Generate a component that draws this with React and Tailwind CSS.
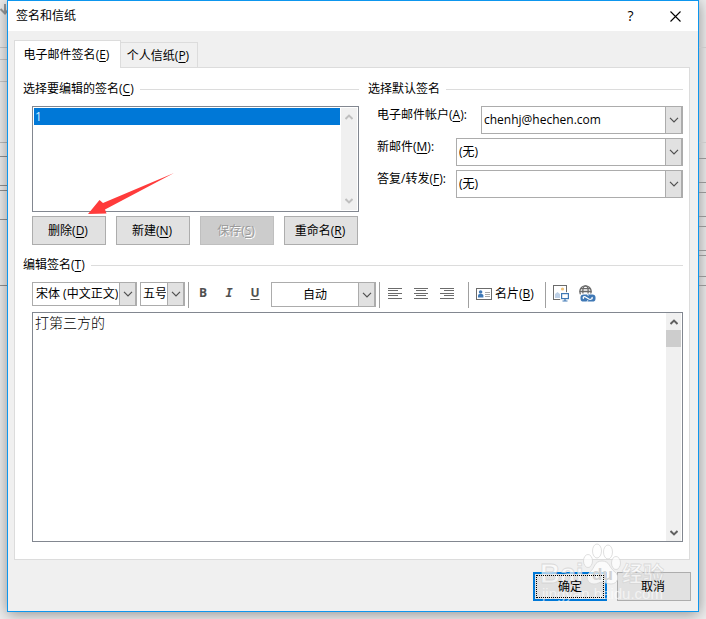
import React from "react";

const leftRows = [
  { h: "h-[48px]", c: "border-[#c9c9c9]" },
  { h: "h-[12px]", c: "border-[#c9c9c9]" },
  { h: "h-[22px]", c: "border-[#c9c9c9]" },
  { h: "h-[61px]", c: "border-[#bcbcbc]" },
  { h: "h-[14px]", c: "border-[#939393]" },
  { h: "h-[29px]", c: "border-[#939393]" },
  { h: "h-[5px]", c: "border-[#939393]" },
  { h: "h-[29px]", c: "border-[#939393]" },
  { h: "h-[66px]", c: "border-[#939393]" },
];

const rightRows = [
  { h: "h-[48px]", c: "border-[#c9c9c9]" },
  { h: "h-[95px]", c: "border-[#c9c9c9]" },
  { h: "h-[16px]", c: "border-[#939393]" },
  { h: "h-[24px]", c: "border-[#939393]" },
  { h: "h-[10px]", c: "border-[#939393]" },
  { h: "h-[24px]", c: "border-[#939393]" },
  { h: "h-[10px]", c: "border-[#939393]" },
  { h: "h-[24px]", c: "border-[#939393]" },
  { h: "h-[5px]", c: "border-[#939393]" },
  { h: "h-[21px]", c: "border-[#939393]" },
  { h: "h-[9px]", c: "border-[#939393]" },
];

function Backdrop({ rows, children }) {
  return (
    <div aria-hidden="true" className="relative w-[7px] shrink-0 overflow-hidden">
      {rows.map((r, i) => (
        <div key={i} className={`border-b ${r.h} ${r.c}`} />
      ))}
      {children}
    </div>
  );
}

function Key({ children }) {
  return (
    <>
      (<u className="underline underline-offset-2">{children}</u>)
    </>
  );
}

function Chevron() {
  return (
    <svg width="10" height="6" viewBox="0 0 10 6" fill="none" stroke="#505050" strokeWidth="1.2" aria-hidden="true">
      <path d="M1 0.8 L5 4.8 L9 0.8" />
    </svg>
  );
}

function ScrollArrow({ up, color }) {
  return (
    <svg width="8" height="6" viewBox="0 0 8 6" fill="none" stroke={color} strokeWidth="2" aria-hidden="true">
      <path d={up ? "M0.5 5 L4 1.6 L7.5 5" : "M0.5 1 L4 4.4 L7.5 1"} />
    </svg>
  );
}

function Dropdown({ id, label, value, className, pad = "pl-[2px]" }) {
  return (
    <div className={`relative ${className}`}>
      <select
        id={id}
        aria-label={label}
        className={`block h-full w-full appearance-none overflow-hidden border border-[#acacac] bg-white pr-[18px] text-black outline-none ${pad}`}
      >
        <option>{value}</option>
      </select>
      <span className="pointer-events-none absolute inset-y-0 right-0 flex w-[18px] items-center justify-center border border-r-2 border-[#acacac] bg-[#e1e1e1]">
        <Chevron />
      </span>
    </div>
  );
}

function PushButton({ children, disabled }) {
  return (
    <button
      type="button"
      disabled={disabled}
      className="h-[29px] w-[74px] border border-[#adadad] bg-[#e1e1e1] pr-[2px] text-black disabled:border-[#bfbfbf] disabled:bg-[#cccccc] disabled:text-[#9a9a9a] disabled:[text-shadow:1px_1px_0_#fff]"
    >
      <span className="relative z-10">{children}</span>
    </button>
  );
}

function Heading({ children, htmlFor }) {
  return (
    <div className="flex h-4 items-center gap-[6px]">
      <label htmlFor={htmlFor} className="whitespace-nowrap">{children}</label>
      <span className="h-px flex-1 bg-[#dcdcdc]" />
    </div>
  );
}

function Separator() {
  return <span className="h-[26px] w-px shrink-0 bg-[#a0a0a0]" />;
}

function AlignIcon({ x }) {
  return (
    <svg width="14" height="11" viewBox="0 0 14 11" shapeRendering="crispEdges" fill="#6b6b6b" aria-hidden="true">
      <rect x="0" y="0" width="14" height="1" />
      <rect x={x} y="2" width="10" height="1" />
      <rect x="0" y="5" width="14" height="1" />
      <rect x={x} y="7" width="10" height="1" />
      <rect x="0" y="10" width="14" height="1" />
    </svg>
  );
}

function ToolButton({ label, children, className = "w-[26px]" }) {
  return (
    <button type="button" aria-label={label} className={`flex h-[22px] shrink-0 items-center justify-center ${className}`}>
      {children}
    </button>
  );
}

function CardIcon() {
  return (
    <svg width="16" height="12" viewBox="0 0 16 12" aria-hidden="true">
      <rect x="0.5" y="0.5" width="15" height="11" fill="#fff" stroke="#6b6b6b" />
      <circle cx="4.6" cy="4" r="1.8" fill="#3f78b5" />
      <path d="M2 9.5 V7.6 Q2 6 3.6 6 H5.8 Q7.4 6 7.4 7.6 V9.5 Z" fill="#3f78b5" />
      <path d="M9 4.5 H14 M9 6.5 H14 M9 8.5 H14" stroke="#a8a8a8" strokeWidth="1" />
    </svg>
  );
}

function PictureIcon() {
  return (
    <svg width="16" height="17" viewBox="0 0 16 17" aria-hidden="true">
      <rect x="0.5" y="0.5" width="13" height="14" fill="#fff" stroke="#6b6b6b" />
      <circle cx="9.5" cy="4" r="1.6" fill="#efc27a" />
      <path d="M2 13 V9 L4.5 7 L7 9 V13 Z" fill="#bdd0e6" />
      <rect x="7.2" y="7.2" width="8.8" height="9.8" fill="#fff" />
      <rect x="8.6" y="8.6" width="6.8" height="5" fill="#fff" stroke="#3f78b5" strokeWidth="1.2" />
      <path d="M12 13.6 V15.6 M9.5 16 H14.5" stroke="#3f78b5" strokeWidth="1.2" />
    </svg>
  );
}

function LinkIcon() {
  return (
    <svg width="17" height="17" viewBox="0 0 17 17" fill="none" aria-hidden="true">
      <g stroke="#6b6b6b" strokeWidth="1.3">
        <circle cx="6.5" cy="6.5" r="5.7" />
        <ellipse cx="6.5" cy="6.500" rx="2.7" ry="5.7" />
        <path d="M0.8 6.5 H12.2 M1.6 3.6 H11.4" />
      </g>
      <rect x="1" y="8.6" width="16" height="8.4" rx="2" fill="#fff" />
      <rect x="1.500" y="9.400" width="15" height="7.200" rx="3.2" fill="#3f78b5" />
      <path d="M4.600 13.900 C3.400 12 5.500 11 7 12.200 L9.800 14 C11.600 15 14 13.800 12.900 12" stroke="#fff" strokeWidth="1.300" />
      <path d="M8.300 9.200 L9.300 10.800 M8 16.800 L8.900 15.200" stroke="#fff" strokeWidth="0.900" />
    </svg>
  );
}

function Watermark() {
  return (
    <svg
      aria-hidden="true"
      className="pointer-events-none absolute right-8 bottom-[8px] z-0"
      width="126"
      height="60"
      viewBox="0 0 126 60"
      fontFamily='"Liberation Sans", "Noto Sans CJK SC", sans-serif'
    >
      <g fill="#fff" fillOpacity="0.7" stroke="#d2d2d2" strokeOpacity="0.7" strokeWidth="1">
        <ellipse cx="48" cy="18" rx="4.5" ry="6.5" />
        <ellipse cx="57" cy="8" rx="4.5" ry="7" />
        <ellipse cx="68" cy="9" rx="4.5" ry="7" />
        <ellipse cx="76" cy="20" rx="4.5" ry="6.5" />
        <path d="M62 18 C54 18 55 25 50 29 C45 33 47 41 54 41 C58 41 59 39 62 39 C65 39 67 41 71 41 C78 41 80 33 75 29 C69 25 70 18 62 18 Z" />
      </g>
      <g fontWeight="bold" fill="#fff" fillOpacity="0.65" stroke="#d2d2d2" strokeOpacity="0.8" strokeWidth="0.8">
        <text x="0" y="40" fontSize="28">Bai</text>
        <text x="82" y="38" fontSize="21">经验</text>
      </g>
      <text x="52" y="37" fontSize="17" fontWeight="bold" fill="#d2d2d2">du</text>
      <text x="2" y="56" fontSize="15" fill="#fff" fillOpacity="0.6">jingyan.baidu.com</text>
    </svg>
  );
}

export default function App() {
  return (
    <div className='flex min-h-screen overflow-hidden bg-[#eeeeee] font-["Open_Sans","Noto_Sans_CJK_SC",sans-serif] text-[12px] leading-4 text-black'>
      <Backdrop rows={leftRows}>
        <svg className="absolute top-1 left-0" width="8" height="11" viewBox="0 0 8 11" fill="none" stroke="#9a9a9a" strokeWidth="2">
          <path d="M5 0 V9 M0.5 5 L5 9.5 L9 5" />
        </svg>
      </Backdrop>

      <main className="relative mb-[7px] flex min-w-0 flex-1 flex-col border border-[#0d96ee] bg-[#f0f0f0] shadow-[0_2px_14px_rgba(0,0,0,0.4)]">
        <header className="flex h-[30px] items-center bg-white pl-2">
          <h1 className="flex-1">签名和信纸</h1>
          <button type="button" aria-label="帮助" className="h-full w-[45px] text-[14px] font-medium">?</button>
          <button type="button" aria-label="关闭" className="flex h-full w-[45px] items-center justify-center">
            <svg width="11" height="11" viewBox="0 0 11 11" stroke="#000" strokeWidth="1.1" aria-hidden="true">
              <path d="M0.5 0.5 L10.5 10.5 M10.5 0.5 L0.5 10.5" />
            </svg>
          </button>
        </header>

        <div className="flex flex-1 flex-col px-[6px] pt-[9px]">
          <div role="tablist" className="relative flex items-end">
            <button type="button" role="tab" aria-selected="true" className="relative -mb-px h-[28px] w-[107px] border border-b-0 border-[#dcdcdc] bg-white pr-[2px]">
              电子邮件签名<Key>E</Key>
            </button>
            <button type="button" role="tab" aria-selected="false" className="h-[25px] w-[77px] border border-b-0 border-l-0 border-[#dcdcdc] bg-[#f0f0f0] pt-[2px] pr-[2px]">
              个人信纸<Key>P</Key>
            </button>
          </div>

          <div className="mr-[2px] border border-[#dcdcdc] bg-white pt-[13px] pr-[6px] pb-[17px] pl-2" role="tabpanel">
            <div className="flex gap-[9px]">
              <section className="w-[336px] shrink-0">
                <Heading htmlFor="signatures">选择要编辑的签名<Key>C</Key></Heading>
                <div className="relative mt-[9px] ml-[9px] flex h-[106px] border border-[#828790] bg-white p-px">
                  <select
                    id="signatures"
                    size="6"
                    defaultValue="1"
                    className="h-full min-w-0 flex-1 appearance-none overflow-hidden border-0 bg-white outline-none"
                  >
                    <option
                      value="1"
                      className="h-[17px] min-h-0 p-0 pl-px leading-[17px] checked:bg-[linear-gradient(#0078d7,#0078d7)] [-webkit-text-fill-color:#d5ecff]"
                    >
                      1
                    </option>
                  </select>
                  <div aria-hidden="true" className="ml-px flex w-4 flex-col items-center justify-between bg-[#f0f0f0] py-[6px]">
                    <ScrollArrow up color="#bfbfbf" />
                    <ScrollArrow color="#bfbfbf" />
                  </div>
                  <svg className="pointer-events-none absolute top-[66px] left-[55px]" width="86" height="42" viewBox="0 0 86 42" aria-hidden="true">
                    <path d="M86 0 L15 30 L11.5 27 L0 41 L18.5 40.5 L17 36.5 Z" fill="#ff3b3b" />
                  </svg>
                </div>
                <div className="mt-1 ml-[9px] flex gap-[10px]">
                  <PushButton>删除<Key>D</Key></PushButton>
                  <PushButton>新建<Key>N</Key></PushButton>
                  <PushButton disabled>保存<Key>S</Key></PushButton>
                  <PushButton>重命名<Key>R</Key></PushButton>
                </div>
              </section>

              <section className="min-w-0 flex-1">
                <Heading>选择默认签名</Heading>
                <div className="mt-[9px] ml-[9px] flex flex-col gap-1">
                  <div className="flex items-start">
                    <label htmlFor="account" className="w-[104px] shrink-0 leading-[18px]">电子邮件帐户<Key>A</Key>:</label>
                    <Dropdown id="account" value="chenhj@hechen.com" className="h-7 min-w-0 flex-1" />
                  </div>
                  <div className="flex items-start">
                    <label htmlFor="newmail" className="w-[79px] shrink-0 leading-[18px]">新邮件<Key>M</Key>:</label>
                    <Dropdown id="newmail" value="(无)" className="h-7 min-w-0 flex-1" />
                  </div>
                  <div className="flex items-start">
                    <label htmlFor="reply" className="w-[79px] shrink-0 leading-[18px]">答复/转发<Key>F</Key>:</label>
                    <Dropdown id="reply" value="(无)" className="h-7 min-w-0 flex-1" />
                  </div>
                </div>
              </section>
            </div>

            <section className="mt-3">
              <Heading htmlFor="editor">编辑签名<Key>T</Key></Heading>
              <div className="mt-[9px] ml-[9px] flex h-[25px] items-start">
                <Dropdown label="字体" value="宋体 (中文正文)" className="h-6 w-[105px]" pad="pl-[3px]" />
                <Dropdown label="字号" value="五号" className="mx-[3px] h-6 w-[45px]" />
                <Separator />
                <ToolButton label="加粗" className="ml-px w-[26px]">
                  <span className="text-[12px] font-bold text-[#505050]">B</span>
                </ToolButton>
                <ToolButton label="倾斜">
                  <span className='font-["DejaVu_Sans_Mono",monospace] text-[12px] font-bold text-[#505050] italic'>I</span>
                </ToolButton>
                <ToolButton label="下划线">
                  <span className="text-[12px] font-bold text-[#505050] underline decoration-1 underline-offset-2">U</span>
                </ToolButton>
                <Dropdown label="颜色" value="自动" className="mx-[3px] h-[25px] w-[105px]" pad="pl-[31px]" />
                <Separator />
                <ToolButton label="左对齐" className="ml-[2px] w-[26px]"><AlignIcon x="0" /></ToolButton>
                <ToolButton label="居中"><AlignIcon x="2" /></ToolButton>
                <ToolButton label="右对齐"><AlignIcon x="4" /></ToolButton>
                <span className="w-[8px]" />
                <Separator />
                <button type="button" className="mx-[7px] flex h-[23px] w-[62px] shrink-0 items-center gap-[3px] whitespace-nowrap">
                  <CardIcon />
                  <span>名片<Key>B</Key></span>
                </button>
                <Separator />
                <ToolButton label="图片" className="ml-[2px] w-[26px]"><PictureIcon /></ToolButton>
                <ToolButton label="超链接"><LinkIcon /></ToolButton>
              </div>
              <div className="mt-[5px] ml-[9px] flex h-[230px] border border-[#828790] bg-white">
                <textarea
                  id="editor"
                  defaultValue="打第三方的"
                  className='min-w-0 flex-1 resize-none overflow-hidden px-[2px] font-["Noto_Sans_CJK_SC",sans-serif] text-[14px] leading-[18px] font-light outline-none'
                />
                <div aria-hidden="true" className="mr-px flex w-[15px] flex-col items-center bg-[#f0f0f0]">
                  <span className="flex h-[17px] items-center"><ScrollArrow up color="#606060" /></span>
                  <span className="h-[17px] w-full bg-[#cdcdcd]" />
                  <span className="mt-auto flex h-[17px] items-center"><ScrollArrow color="#606060" /></span>
                </div>
              </div>
            </section>
          </div>

          <footer className="mt-3 mb-[10px] flex justify-end gap-[10px] pr-px">
            <button type="button" className="h-[29px] w-[74px] border-2 border-[#0078d7] bg-[#e1e1e1] p-px">
              <span className="relative z-10 flex h-full items-center justify-center border border-dotted border-black">确定</span>
            </button>
            <PushButton>取消</PushButton>
          </footer>
        </div>
        <Watermark />
      </main>

      <Backdrop rows={rightRows} />
    </div>
  );
}
